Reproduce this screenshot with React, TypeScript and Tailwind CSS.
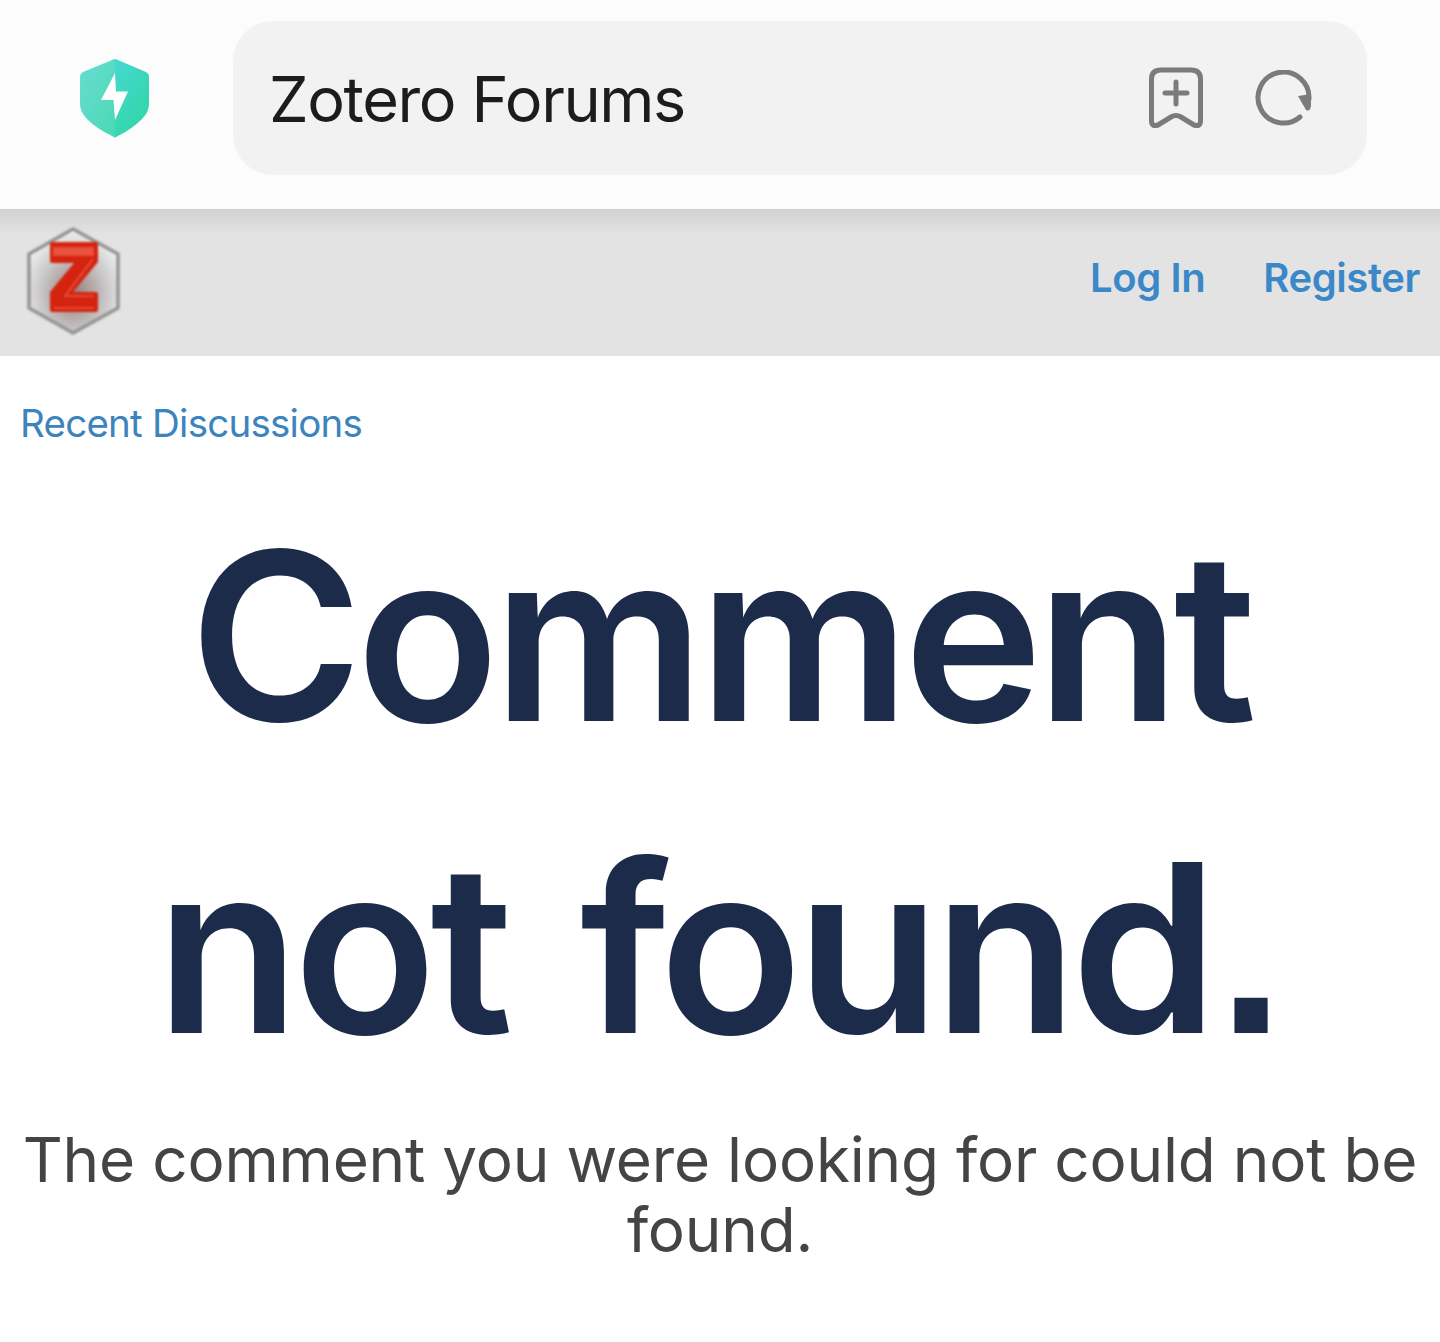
const sans = 'font-["Inter","Noto_Sans",sans-serif]'

function ShieldIcon() {
  return (
    <svg width="70" height="80" viewBox="0 0 70 80" className="block">
      <defs>
        <linearGradient id="shieldLeft" x1="0" y1="0" x2="1" y2="1">
          <stop offset="0" stopColor="#68dcd3" />
          <stop offset="1" stopColor="#4bd9b3" />
        </linearGradient>
        <linearGradient id="shieldRight" x1="0" y1="0" x2="0.6" y2="1">
          <stop offset="0" stopColor="#44d9d1" />
          <stop offset="1" stopColor="#33d5a8" />
        </linearGradient>
      </defs>
      <path d="M35 1 Q37 1 39 2.500 L66 14 Q69 15.500 69 19 V46 Q69 54 62 61 Q52 71 38 78 Q35 79.500 35 79.500 Z" fill="url(#shieldRight)" />
      <path d="M35 1 Q33 1 31 2.500 L3 14 Q0 15.500 0 19 V46 Q0 54 7 61 Q17 71 32 78 Q35 79.500 35 79.500 Z" fill="url(#shieldLeft)" />
      <path d="M35 15 L21 42 H33.500 L35 62 L48 33.500 H36 Z" fill="#fff" />
    </svg>
  )
}

function BookmarkPlus() {
  return (
    <svg width="54" height="62" viewBox="0 0 54 62" fill="none" stroke="#7b7b7b" strokeWidth="5" strokeLinecap="round" strokeLinejoin="round" className="mb-[2px] block">
      <path d="M12 3 H42 Q51.500 3 51.500 12 V54 Q51.500 60 45 58 L32 50 Q27 47 22 50 L9 58 Q2.500 60 2.500 54 V12 Q2.500 3 12 3 Z" />
      <path d="M27 15 V37 M16 26 H38" />
    </svg>
  )
}

function ReloadIcon() {
  return (
    <svg width="58" height="58" viewBox="0 0 58 58" fill="none" className="block">
      <path d="M45 47 A25.500 25.500 0 1 1 54 29" stroke="#7b7b7b" strokeWidth="5" strokeLinecap="round" />
      <path d="M43 26 L56 24 V36 Q55 42 51 40 Z" fill="#7b7b7b" />
    </svg>
  )
}

function ZoteroLogo() {
  return (
    <svg width="94" height="110" viewBox="0 0 94 110" className="block blur-[1px]">
      <defs>
        <radialGradient id="hexFill" cx="0.5" cy="0.62" r="0.62">
          <stop offset="0" stopColor="#9a7a78" />
          <stop offset="0.55" stopColor="#c4c2c2" />
          <stop offset="1" stopColor="#f2f2f2" />
        </radialGradient>
      </defs>
      <path d="M46 3 L91 28 V82 L46 107 L2 82 V28 Z" fill="url(#hexFill)" stroke="#949494" strokeWidth="3.500" strokeLinejoin="round" />
      <path d="M25 16 H69 Q71 16 71 18 V36 L46 66 H69 Q71 66 71 68 V84 Q71 86 69 86 H25 Q23 86 23 84 V66 L47 37 H25 Q23 37 23 35 V18 Q23 16 25 16 Z" fill="#d4230f" />
      <path d="M26 21 H67 V30 H26 Z" fill="#e9523c" />
      <path d="M66 33 L38 70 H67 M27 82 H67" stroke="#ea5a44" strokeWidth="1.500" fill="none" />
    </svg>
  )
}

export default function App() {
  return (
    <div className={`${sans} min-h-[1342px] bg-white`}>
      <div className="flex h-[209px] items-center bg-[#fcfcfc] pb-[13px] pl-[80px] pr-[73px]">
        <div className="w-[153px] shrink-0">
          <ShieldIcon />
        </div>
        <div className="flex h-[154px] grow items-center justify-between rounded-[40px] bg-[#f2f2f2] pl-[36px] pr-[54px] pt-[2px]">
          <span className="text-[63px] tracking-[-1.400px] text-[#1c1c1c]">Zotero Forums</span>
          <div className="flex items-center gap-[52px]">
            <BookmarkPlus />
            <ReloadIcon />
          </div>
        </div>
      </div>

      <header className="flex h-[147px] items-center justify-between bg-[#e3e3e3] bg-gradient-to-b from-[#d2d2d2] to-[#e3e3e3] bg-[length:100%_26px] bg-no-repeat pl-[27px] pr-[20px]">
        <div className="pb-[4px]">
          <ZoteroLogo />
        </div>
        <nav className="flex gap-[58px] pb-[10px] text-[40px] font-semibold tracking-[-0.4px] text-[#3b88c8]">
          <a>Log In</a>
          <a>Register</a>
        </nav>
      </header>

      <main className="px-[20px]">
        <a className="mt-[40px] block text-[38.5px] leading-[54px] tracking-[-0.750px] text-[#3b84bd]">Recent Discussions</a>
        <h1 className="mt-[30px] text-center text-[235px] font-semibold leading-[312px] tracking-[-6.300px] text-[#1c2b4a] [word-spacing:20px]">
          Comment not found<span className='ml-[7px] font-["Liberation_Sans",sans-serif] font-bold leading-none tracking-normal'>.</span>
        </h1>
        <p className="mt-[21px] text-center text-[62px] leading-[70px] tracking-[-0.2px] text-[#444444]">
          The comment you were looking for could not be found.
        </p>
      </main>
    </div>
  )
}
